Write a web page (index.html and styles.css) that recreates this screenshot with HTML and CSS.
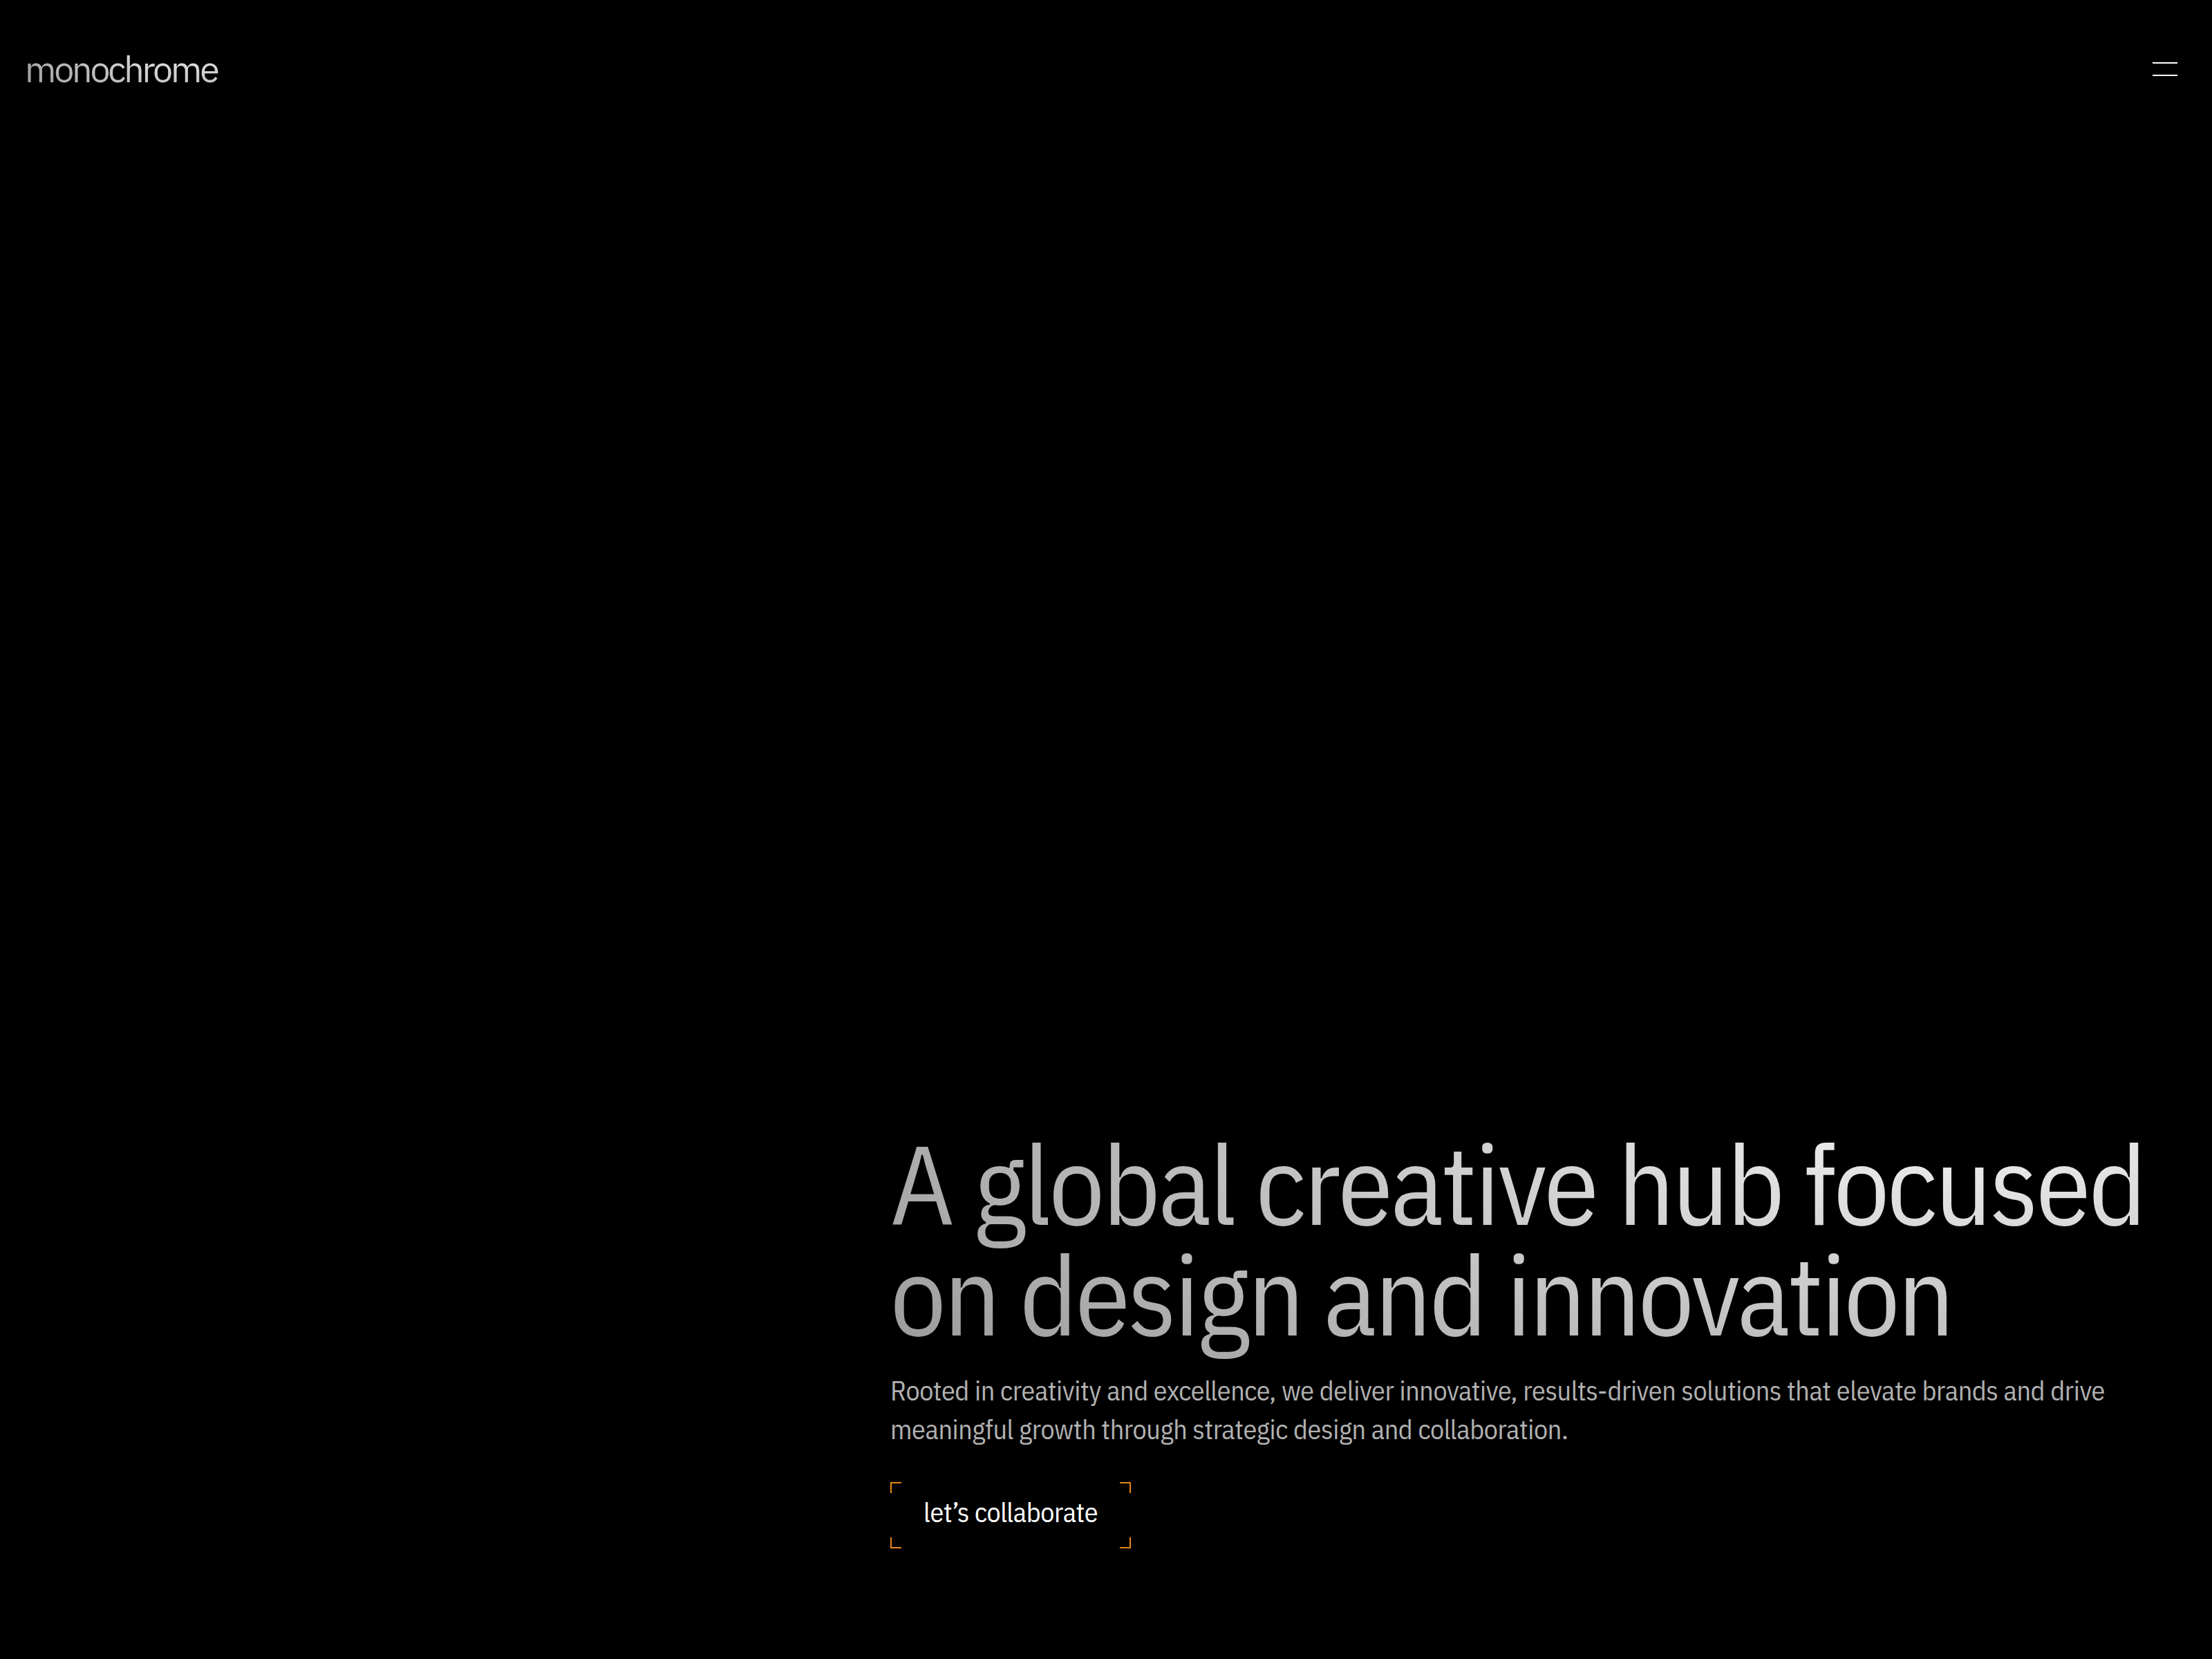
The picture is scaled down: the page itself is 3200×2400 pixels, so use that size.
FILE: index.html
```html
<!DOCTYPE html>
<html lang="en">
<head>
    <meta charset="UTF-8">
    <meta name="viewport" content="width=device-width, initial-scale=1.0">
    <title>monochrome</title>
    <link rel="stylesheet" href="styles.css">
</head>
<body>
    <!-- Header -->
    <header class="header">
        <a href="#" class="logo">monochrome</a>
        <button type="button" class="menu-btn" aria-label="Menu">
            <span class="menu-line"></span>
            <span class="menu-line"></span>
        </button>
    </header>

    <!-- Hero -->
    <main class="hero">
        <div class="hero-content">
            <h1>A global creative hub focused on design and innovation</h1>
            <p>Rooted in creativity and excellence, we deliver innovative, results-driven solutions that elevate brands and drive meaningful growth through strategic design and collaboration.</p>
            <a href="#" class="cta">
                let’s collaborate
                <span class="corner top-left"></span>
                <span class="corner top-right"></span>
                <span class="corner bottom-left"></span>
                <span class="corner bottom-right"></span>
            </a>
        </div>
    </main>
</body>
</html>
```
FILE: styles.css
```css
* {
    margin: 0;
    padding: 0;
    box-sizing: border-box;
}

body {
    font-family: 'IBM Plex Sans Condensed', 'Roboto Condensed', Roboto, sans-serif;
    background: #000;
    color: #fff;
    height: 100vh;
    display: flex;
    flex-direction: column;
}

a {
    color: inherit;
    text-decoration: none;
}

.header {
    display: flex;
    align-items: center;
    justify-content: space-between;
    height: 200px;
    padding: 0 36px;
}

.logo,
h1 {
    background: radial-gradient(102% 170% at 82% 0%, #f0f0f0 0%, #999 100%);
    -webkit-background-clip: text;
    background-clip: text;
    color: transparent;
}

.logo {
    font-family: 'IBM Plex Sans', Roboto, sans-serif;
    font-size: 52px;
    line-height: 72px;
    letter-spacing: -0.062em;
    padding-right: 4px;
}

.menu-btn {
    width: 64px;
    height: 64px;
    padding: 0 14px;
    background: none;
    border: none;
    display: flex;
    flex-direction: column;
    justify-content: center;
    gap: 16px;
    cursor: pointer;
}

.menu-line {
    width: 100%;
    height: 2px;
    background: #fff;
}

.hero {
    flex: 1;
    display: flex;
    align-items: flex-end;
    padding: 0 36px 160px;
}

.hero-content {
    width: 1876px;
    margin-left: auto;
    display: flex;
    flex-direction: column;
    align-items: flex-start;
}

h1 {
    width: 100%;
    font-size: 160px;
    font-weight: 400;
    line-height: 160px;
    letter-spacing: -0.02em;
    padding-bottom: 16px;
    margin-bottom: 15px;
}

p {
    font-size: 40px;
    line-height: 56px;
    letter-spacing: -0.01em;
    color: #b0b0b0;
    margin-bottom: 49px;
}

.cta {
    position: relative;
    padding: 15px 48px 25px;
    font-size: 40px;
    line-height: 56px;
    letter-spacing: -0.01em;
}

/* Corner brackets of the button */
.corner {
    position: absolute;
    width: 16px;
    height: 16px;
    border: 0 solid #e5851c;
}

.top-left {
    top: 0;
    left: 0;
    border-width: 2px 0 0 2px;
}

.top-right {
    top: 0;
    right: 0;
    border-width: 2px 2px 0 0;
}

.bottom-left {
    bottom: 0;
    left: 0;
    border-width: 0 0 2px 2px;
}

.bottom-right {
    bottom: 0;
    right: 0;
    border-width: 0 2px 2px 0;
}
```
